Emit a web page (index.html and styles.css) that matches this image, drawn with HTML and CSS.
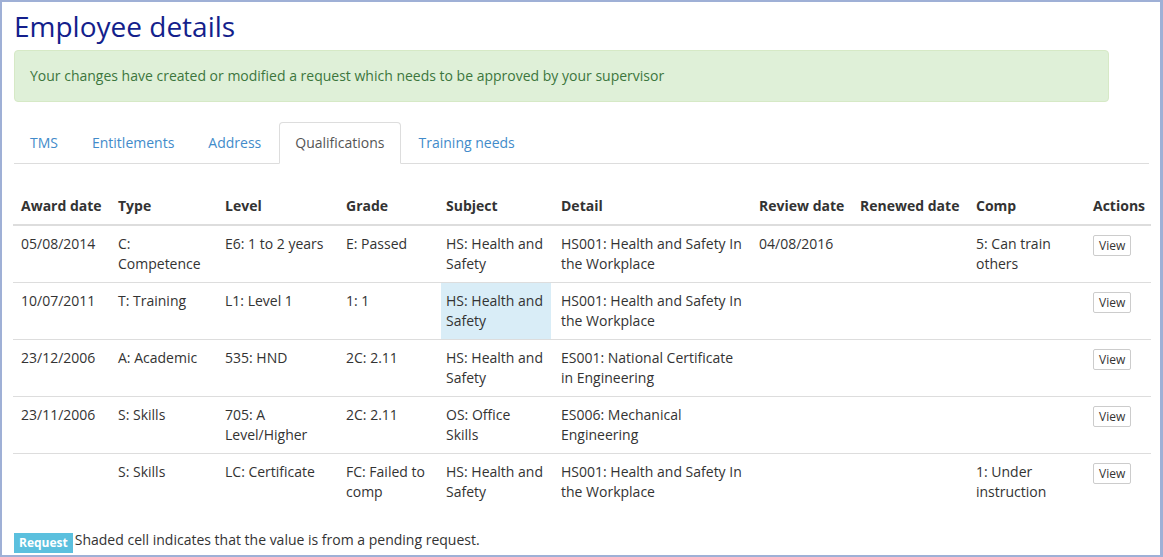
FILE: index.html
```html
<!DOCTYPE html>
<html lang="en">
<head>
    <meta charset="UTF-8">
    <title>Employee details</title>
    <link rel="stylesheet" href="styles.css">
</head>
<body>
<div class="frame">

    <h1 class="page-title">Employee details</h1>

    <div class="alert-success">
        Your changes have created or modified a request which needs to be approved by your supervisor
    </div>

    <!-- Tabs -->
    <ul class="nav-tabs">
        <li><a href="#">TMS</a></li>
        <li><a href="#">Entitlements</a></li>
        <li><a href="#">Address</a></li>
        <li class="active"><a href="#">Qualifications</a></li>
        <li><a href="#">Training needs</a></li>
    </ul>

    <table class="qual-table">
        <colgroup>
            <col style="width:97px">
            <col style="width:107px">
            <col style="width:121px">
            <col style="width:100px">
            <col style="width:115px">
            <col style="width:198px">
            <col style="width:101px">
            <col style="width:116px">
            <col style="width:117px">
            <col style="width:66px">
        </colgroup>
        <thead>
            <tr>
                <th>Award date</th>
                <th>Type</th>
                <th>Level</th>
                <th>Grade</th>
                <th>Subject</th>
                <th>Detail</th>
                <th>Review date</th>
                <th>Renewed date</th>
                <th>Comp</th>
                <th>Actions</th>
            </tr>
        </thead>
        <tbody>
            <tr>
                <td>05/08/2014</td>
                <td>C: Competence</td>
                <td>E6: 1 to 2 years</td>
                <td>E: Passed</td>
                <td>HS: Health and Safety</td>
                <td>HS001: Health and Safety In the Workplace</td>
                <td>04/08/2016</td>
                <td></td>
                <td>5: Can train others</td>
                <td><button class="btn-view">View</button></td>
            </tr>
            <tr>
                <td>10/07/2011</td>
                <td>T: Training</td>
                <td>L1: Level 1</td>
                <td>1: 1</td>
                <td class="pending">HS: Health and Safety</td>
                <td>HS001: Health and Safety In the Workplace</td>
                <td></td>
                <td></td>
                <td></td>
                <td><button class="btn-view">View</button></td>
            </tr>
            <tr>
                <td>23/12/2006</td>
                <td>A: Academic</td>
                <td>535: HND</td>
                <td>2C: 2.11</td>
                <td>HS: Health and Safety</td>
                <td>ES001: National Certificate in Engineering</td>
                <td></td>
                <td></td>
                <td></td>
                <td><button class="btn-view">View</button></td>
            </tr>
            <tr>
                <td>23/11/2006</td>
                <td>S: Skills</td>
                <td>705: A Level/Higher</td>
                <td>2C: 2.11</td>
                <td>OS: Office Skills</td>
                <td>ES006: Mechanical Engineering</td>
                <td></td>
                <td></td>
                <td></td>
                <td><button class="btn-view">View</button></td>
            </tr>
            <tr>
                <td></td>
                <td>S: Skills</td>
                <td>LC: Certificate</td>
                <td>FC: Failed to comp</td>
                <td>HS: Health and Safety</td>
                <td>HS001: Health and Safety In the Workplace</td>
                <td></td>
                <td></td>
                <td>1: Under instruction</td>
                <td><button class="btn-view">View</button></td>
            </tr>
        </tbody>
    </table>

    <p class="legend">
        <span class="label-info">Request</span>Shaded cell indicates that the value is from a pending request.
    </p>

</div>
</body>
</html>
```

FILE: styles.css
```css
html, body {
    margin: 0;
    padding: 0;
    background: #fff;
}

body {
    font-family: 'Open Sans', 'Liberation Sans', sans-serif;
    font-size: 14px;
    line-height: 20px;
    color: #333;
}

.frame {
    box-sizing: border-box;
    width: 1163px;
    height: 557px;
    border: 2px solid #9fb0d6;
    border-right-width: 3px;
    padding: 0 11px 0 12px;
    overflow: hidden;
}

.page-title {
    margin: 9px 0 8px;
    font-size: 28px;
    line-height: 31px;
    font-weight: normal;
    color: #141f8c;
}

.alert-success {
    margin: 0 40px 20px 0;
    padding: 15px;
    background-color: #dff0d8;
    border: 1px solid #d6e9c6;
    border-radius: 4px;
    color: #3c763d;
}

/* tabs */
.nav-tabs {
    display: flex;
    list-style: none;
    margin: 0;
    padding: 0;
    border-bottom: 1px solid #ddd;
}

.nav-tabs li {
    margin: 0 2px -1px 0;
}

.nav-tabs a {
    display: block;
    padding: 10px 15px;
    border: 1px solid transparent;
    border-radius: 4px 4px 0 0;
    color: #428bca;
    text-decoration: none;
}

.nav-tabs li.active a {
    color: #555;
    background: #fff;
    border-color: #ddd #ddd transparent;
}

/* table */
.qual-table {
    width: 1138px;
    margin: 24px 0 20px -1px;
    border-collapse: collapse;
    table-layout: fixed;
}

.qual-table th,
.qual-table td {
    padding: 8px;
    text-align: left;
    vertical-align: top;
}

.qual-table th {
    font-weight: bold;
    white-space: nowrap;
    border-bottom: 2px solid #ddd;
}

.qual-table td {
    border-top: 1px solid #ddd;
}

.qual-table td.pending {
    background-color: #d9edf7;
    box-shadow: inset 3px 0 #fff, inset -2px 0 #fff;
}

.btn-view {
    margin-top: 1px;
    padding: 1px 5px;
    font-family: inherit;
    font-size: 12px;
    line-height: 17px;
    color: #333;
    background: #fff;
    border: 1px solid #ccc;
    border-radius: 2px;
    cursor: pointer;
}

.legend {
    margin: 1px 0 0;
}

.label-info {
    display: inline-block;
    margin-right: 2px;
    padding: 4px 5px 4px;
    font-size: 12px;
    font-weight: bold;
    line-height: 12px;
    vertical-align: -2px;
    color: #fff;
    background-color: #5bc0de;
}
```
